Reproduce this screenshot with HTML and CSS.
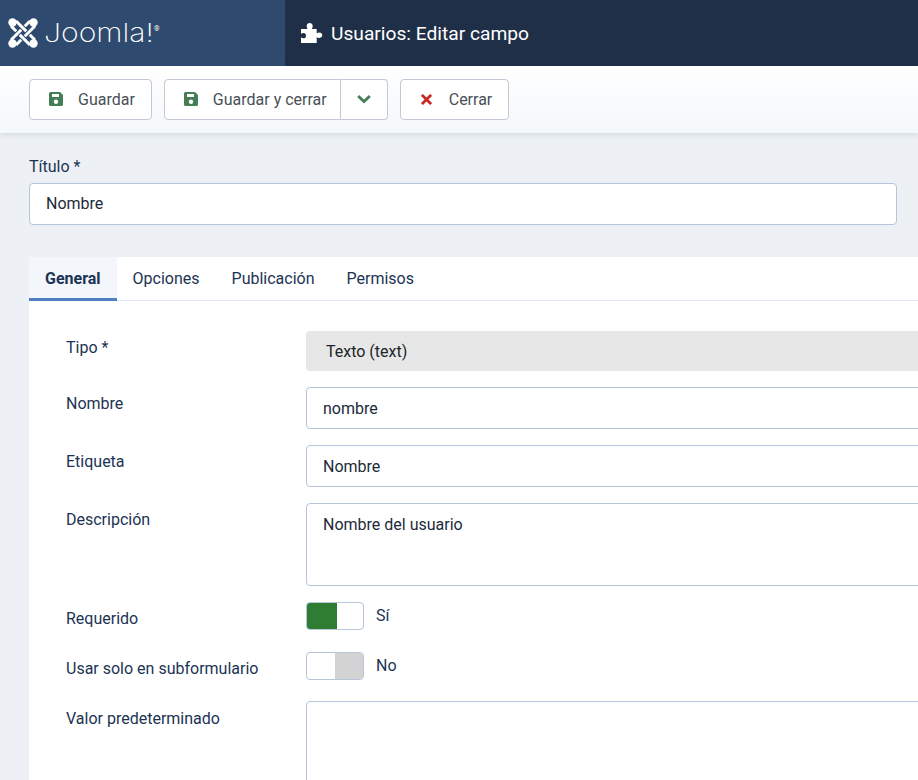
FILE: index.html
```html
<!DOCTYPE html>
<html lang="es">
<head>
    <meta charset="UTF-8">
    <title>Usuarios: Editar campo</title>
    <link rel="stylesheet" href="styles.css">
</head>
<body>
    <header class="topbar">
        <div class="brand">
            <svg class="brand-icon" viewBox="0 0 30 30" width="30" height="30">
                <g fill="none">
                    <path stroke="#fff" stroke-width="3" d="M8 3l19 19M3 8l19 19"/>
                    <path stroke="#2e4a6f" stroke-width="5" d="M20 5L5 20M25 10L10 25"/>
                    <path stroke="#fff" stroke-width="3" d="M22 3L3 22M27 8L8 27"/>
                    <path stroke="#2e4a6f" stroke-width="5" d="M13.500 8.500l3 3M13.500 18.500l3 3"/>
                    <path stroke="#fff" stroke-width="3" d="M12.500 7.500l5 5M12.500 17.500l5 5"/>
                </g>
                <circle cx="4.500" cy="4.500" r="4.200" fill="#fff"/>
                <circle cx="25.500" cy="4.500" r="4.200" fill="#fff"/>
                <circle cx="4.500" cy="25.500" r="4.200" fill="#fff"/>
                <circle cx="25.500" cy="25.500" r="4.200" fill="#fff"/>
            </svg>
            <span class="brand-name">Joomla!</span><span class="brand-reg">®</span>
        </div>
        <div class="page-title">
            <svg class="title-icon" viewBox="0 0 22 20" width="22" height="20">
                <path fill="#fff" d="M0 6h6.500C6 4.800 5.700 4 5.700 3 5.700 1.200 7 0 8.700 0s3 1.200 3 3c0 1-.3 1.800-.8 3h4.800v4.200c1-.6 1.700-.8 2.600-.8 1.800 0 3 1.200 3 2.800S19.700 15 18 15c-.9 0-1.600-.3-2.300-.8V20H0v-5.500c1 .6 1.800.8 2.500.8 1.500 0 2.500-1 2.500-2.600S4 10 2.500 10c-.7 0-1.500.2-2.500.8z"/>
            </svg>
            <h1>Usuarios: Editar campo</h1>
        </div>
    </header>

    <div class="toolbar">
        <button class="btn">
            <svg class="save-icon" viewBox="0 0 14 14" width="14" height="14"><path fill="#457d54" fill-rule="evenodd" d="M1.500 0H11l3 3v9.500a1.500 1.500 0 0 1-1.500 1.500h-11A1.500 1.500 0 0 1 0 12.500v-11A1.500 1.500 0 0 1 1.500 0zM3 2v3h7V2zm4 5.500a2.200 2.200 0 1 0 0 4.400 2.200 2.200 0 0 0 0-4.400z"/></svg>
            Guardar
        </button>
        <div class="btn-group">
            <button class="btn btn-main">
                <svg class="save-icon" viewBox="0 0 14 14" width="14" height="14"><path fill="#457d54" fill-rule="evenodd" d="M1.500 0H11l3 3v9.500a1.500 1.500 0 0 1-1.500 1.500h-11A1.500 1.500 0 0 1 0 12.500v-11A1.500 1.500 0 0 1 1.500 0zM3 2v3h7V2zm4 5.500a2.200 2.200 0 1 0 0 4.400 2.200 2.200 0 0 0 0-4.400z"/></svg>
                Guardar y cerrar
            </button>
            <button class="btn btn-caret">
                <svg viewBox="0 0 14 10" width="14" height="10"><path fill="none" stroke="#457d54" stroke-width="2.800" d="M1.200 2l5.800 5.500L12.800 2"/></svg>
            </button>
        </div>
        <button class="btn">
            <svg class="close-icon" viewBox="0 0 12 12" width="11" height="11"><path fill="none" stroke="#c52827" stroke-width="3" d="M1 1l10 10M11 1L1 11"/></svg>
            Cerrar
        </button>
    </div>

    <main class="content">
        <label class="title-label">Título *</label>
        <input class="input title-input" type="text" value="Nombre">

        <section class="panel">
            <nav class="tabs">
                <a class="tab active">General</a>
                <a class="tab">Opciones</a>
                <a class="tab">Publicación</a>
                <a class="tab">Permisos</a>
            </nav>
            <div class="fields">
                <div class="row">
                    <label class="row-label">Tipo *</label>
                    <div class="readonly">Texto (text)</div>
                </div>
                <div class="row">
                    <label class="row-label">Nombre</label>
                    <input class="input" type="text" value="nombre">
                </div>
                <div class="row">
                    <label class="row-label">Etiqueta</label>
                    <input class="input" type="text" value="Nombre">
                </div>
                <div class="row">
                    <label class="row-label">Descripción</label>
                    <textarea class="input area">Nombre del usuario</textarea>
                </div>
                <div class="row row-switch">
                    <label class="row-label">Requerido</label>
                    <div class="switch on"><span></span></div>
                    <span class="switch-text">Sí</span>
                </div>
                <div class="row row-switch">
                    <label class="row-label">Usar solo en subformulario</label>
                    <div class="switch"><span></span></div>
                    <span class="switch-text">No</span>
                </div>
                <div class="row">
                    <label class="row-label label-low">Valor predeterminado</label>
                    <textarea class="input area tall"></textarea>
                </div>
            </div>
        </section>
    </main>
</body>
</html>
```

FILE: styles.css
```css
*{
    margin: 0;
    padding: 0;
    box-sizing: border-box;
}
html, body{
    height: 780px;
    overflow: hidden;
}
body{
    background: #edf1f6;
    font-family: Roboto, "Liberation Sans", sans-serif;
    font-size: 16px;
    color: #1c3353;
}

/* top bar */
.topbar{
    display: flex;
    height: 66px;
    background: #1f2f47;
}
.brand{
    width: 285px;
    background: #2e4a6f;
    display: flex;
    align-items: center;
    padding-left: 8px;
    color: #fff;
}
.brand-icon{
    flex: none;
    margin-right: 6px;
}
/* the logo type is wider than any installed font, stretch it */
.brand-name{
    width: 110px;
    font-family: Inter, sans-serif;
    font-weight: 200;
    font-size: 26px;
    line-height: 32px;
    transform: scaleX(1.16);
    transform-origin: left;
}
.brand-reg{
    font-size: 7px;
    line-height: 8px;
    align-self: flex-start;
    margin-top: 25px;
}
.page-title{
    display: flex;
    align-items: center;
    padding-left: 16px;
    color: #fff;
}
.title-icon{
    margin-right: 8px;
}
.page-title h1{
    font-size: 19.200px;
    font-weight: 400;
}

/* toolbar */
.toolbar{
    height: 67px;
    display: flex;
    align-items: center;
    padding: 0 29px 1px;
    gap: 12px;
    background: linear-gradient(#fff, #f4f7fb);
    box-shadow: 0 2px 5px rgba(40, 60, 100, .12);
}
.btn{
    height: 41px;
    display: flex;
    align-items: center;
    padding: 0 16px 0 19px;
    background: #fff;
    border: 1px solid #c2c8d4;
    border-radius: 4px;
    font: inherit;
    color: #495057;
}
.save-icon{
    margin-right: 15px;
}
.close-icon{
    margin: 0 17px 0 1px;
}
.btn-group{
    display: flex;
}
.btn-main{
    border-radius: 4px 0 0 4px;
    padding-right: 13px;
}
.btn-caret{
    border-left: 0;
    border-radius: 0 4px 4px 0;
    width: 47px;
    justify-content: center;
    padding: 0;
}

/* form */
.content{
    padding: 24px 0 0 29px;
}
.title-label{
    display: block;
    height: 26px;
    line-height: 19px;
}
.input{
    display: block;
    height: 42px;
    border: 1px solid #b7c5db;
    border-radius: 4px;
    background: #fff;
    padding: 0 16px;
    font: inherit;
    color: #1c2a3a;
    outline: 0;
}
.title-input{
    width: 868px;
    padding-bottom: 2px;
}
.panel{
    margin-top: 32px;
    width: 1100px;
    background: #fff;
}
.tabs{
    display: flex;
    height: 44px;
    border-bottom: 1px solid #dde6f2;
}
.tab{
    padding: 0 16px;
    line-height: 43px;
    color: #1c3353;
}
.tab.active{
    height: 44px;
    background: #f3f6fa;
    border-bottom: 3px solid #5080c2;
    font-weight: 700;
}
.fields{
    padding: 30px 37px 0;
}
.row{
    display: flex;
    margin-bottom: 16px;
}
.row-label{
    width: 240px;
    flex: none;
    padding-top: 7px;
    line-height: 19px;
}
.label-low{
    padding-top: 8px;
}
.row .input, .readonly{
    width: 760px;
}
.readonly{
    height: 40px;
    line-height: 41px;
    padding-left: 20px;
    background: #e7e7e7;
    border-radius: 4px;
    color: #212529;
}
.area{
    height: 83px;
    padding-top: 11px;
    resize: none;
    line-height: 19px;
}
.tall{
    height: 120px;
}
.row-switch{
    margin-bottom: 22px;
    height: 28px;
    align-items: center;
}
.row-switch:nth-child(6){
    margin-bottom: 21px;
}
.row-switch .row-label{
    padding-top: 4px;
}
.switch{
    width: 58px;
    height: 28px;
    border: 1px solid #b7c5db;
    border-radius: 4px;
    background: #fff;
    display: flex;
    justify-content: flex-end;
    overflow: hidden;
}
.switch span{
    width: 28px;
    background: #d3d3d3;
}
.switch.on{
    justify-content: flex-start;
}
.switch.on span{
    width: 30px;
    background: #2f7d32;
}
.switch-text{
    margin-left: 12px;
    margin-top: -2px;
}
```
